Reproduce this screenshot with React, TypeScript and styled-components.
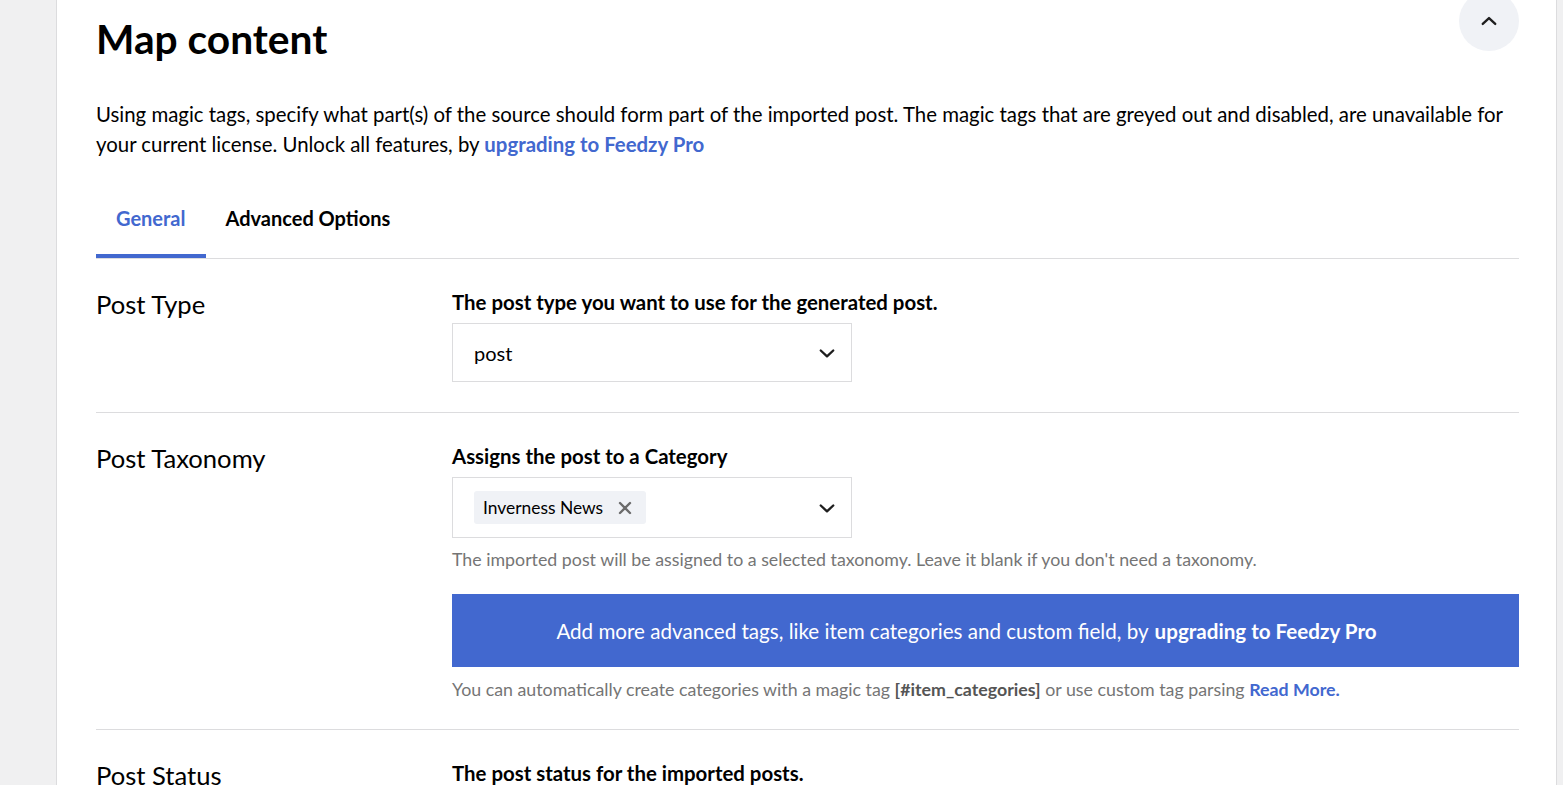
import * as React from 'react';
import styled, { createGlobalStyle } from 'styled-components';

//#region styled
const GlobalStyle = createGlobalStyle`
  html, body {
    margin: 0;
    padding: 0;
    background: #f0f0f1;
    font-family: Lato, "Noto Sans", sans-serif;
    color: #000;
  }
`

const Page = styled.div`
  display: flex;
  height: 785px;
  padding: 0 6px 0 56px;
  overflow: hidden;
`

const Card = styled.div`
  flex: 1;
  background: #fff;
  border-left: 1px solid #dcdcde;
  border-right: 1px solid #dcdcde;
  padding: 0 37px 0 39px;
`

const Header = styled.div`
  display: flex;
  justify-content: space-between;
  align-items: flex-start;
`

const Title = styled.h1`
  margin: 15px 0 0;
  font-size: 40.7px;
  line-height: 48px;
  font-weight: 700;
`

const ToggleButton = styled.button`
  width: 60px;
  height: 60px;
  margin-top: -9px;
  border: none;
  border-radius: 50%;
  background: #f0f2f6;
  display: flex;
  align-items: center;
  justify-content: center;
  padding: 0;
`

const Intro = styled.p`
  margin: 36px 0 0;
  font-size: 20.4px;
  line-height: 30px;
`

const Link = styled.a`
  color: #4268cf;
  font-weight: 700;
  text-decoration: none;
`

const Tabs = styled.div`
  display: flex;
  margin-top: 21px;
  border-bottom: 1px solid #dcdcde;
`

const Tab = styled.div<{ $active?: boolean }>`
  box-sizing: border-box;
  padding: 0 20px 2px;
  height: 78px;
  display: flex;
  align-items: center;
  font-size: 20px;
  font-weight: 700;
  color: ${p => (p.$active ? '#4268cf' : '#000')};
  box-shadow: ${p => (p.$active ? 'inset 0 -4px 0 #4268cf' : 'none')};
`

const Row = styled.div`
  display: grid;
  grid-template-columns: 356px 1fr;
  padding: 30px 0;
  border-bottom: 1px solid #dcdcde;
`

const RowTitle = styled.h2`
  margin: 0;
  font-size: 25.6px;
  line-height: 30px;
  font-weight: 400;
`

const Field = styled.div`
  display: flex;
  flex-direction: column;
`

const FieldLabel = styled.label`
  font-size: 20.4px;
  line-height: 26px;
  font-weight: 700;
  margin-bottom: 8px;
`

const Select = styled.div<{ $tall?: boolean }>`
  width: 400px;
  box-sizing: border-box;
  height: ${p => (p.$tall ? '61px' : '59px')};
  border: 1px solid #dcdcde;
  display: flex;
  align-items: center;
  justify-content: space-between;
  padding: 0 14px 0 21px;
  font-size: 20px;
`

const Chip = styled.span`
  display: inline-flex;
  align-items: center;
  gap: 15px;
  background: #f0f2f6;
  border-radius: 3px;
  padding: 0 14px 0 9px;
  height: 33px;
  font-size: 17.4px;
`

const Help = styled.p<{ $tight?: boolean }>`
  margin: ${p => (p.$tight ? '9px 0 -3px' : '8px 0 0')};
  font-size: 17.8px;
  line-height: 26px;
  color: #757575;

  b {
    color: #555;
  }
`

const Banner = styled.div`
  margin-top: 22px;
  height: 73px;
  padding-right: 38px;
  background: #4268cf;
  color: #fff;
  display: flex;
  align-items: center;
  justify-content: center;
  font-size: 20.6px;

  b {
    font-weight: 700;
    margin-left: 6px;
  }
`

const LastRow = styled(Row)`
  border-bottom: none;
`
//#endregion

const Chevron = ({ up }: { up?: boolean }) => (
  <svg width="20" height="20" viewBox="0 0 24 24" fill="none" stroke="#1e1e1e" strokeWidth="2.8"
    strokeLinecap="round" strokeLinejoin="round">
    <path d={up ? 'M4.5 15.5l7.5-7 7.5 7' : 'M4.5 9l7.5 7 7.5-7'} />
  </svg>
)

const RemoveIcon = () => (
  <svg width="14" height="14" viewBox="0 0 14 14" stroke="#6b6b6b" strokeWidth="2.4" strokeLinecap="round">
    <path d="M2 2l10 10M12 2L2 12" />
  </svg>
)

export default function App() {
  return (
    <Page>
      <GlobalStyle />
      <Card>
        <Header>
          <Title>Map content</Title>
          <ToggleButton>
            <Chevron up />
          </ToggleButton>
        </Header>
        <Intro>
          Using magic tags, specify what part(s) of the source should form part of the imported post. The magic tags that
          are greyed out and disabled, are unavailable for your current license. Unlock all features, by{' '}
          <Link href="#">upgrading to Feedzy Pro</Link>
        </Intro>

        <Tabs>
          <Tab $active>General</Tab>
          <Tab>Advanced Options</Tab>
        </Tabs>

        <Row>
          <RowTitle>Post Type</RowTitle>
          <Field>
            <FieldLabel>The post type you want to use for the generated post.</FieldLabel>
            <Select>
              <span>post</span>
              <Chevron />
            </Select>
          </Field>
        </Row>

        <Row>
          <RowTitle>Post Taxonomy</RowTitle>
          <Field>
            <FieldLabel>Assigns the post to a Category</FieldLabel>
            <Select $tall>
              <Chip>
                Inverness News <RemoveIcon />
              </Chip>
              <Chevron />
            </Select>
            <Help>The imported post will be assigned to a selected taxonomy. Leave it blank if you don't need a taxonomy.</Help>
            <Banner>
              Add more advanced tags, like item categories and custom field, by <b>upgrading to Feedzy Pro</b>
            </Banner>
            <Help $tight>
              You can automatically create categories with a magic tag <b>[#item_categories]</b> or use custom tag parsing{' '}
              <Link href="#">Read More.</Link>
            </Help>
          </Field>
        </Row>

        <LastRow>
          <RowTitle>Post Status</RowTitle>
          <Field>
            <FieldLabel>The post status for the imported posts.</FieldLabel>
          </Field>
        </LastRow>
      </Card>
    </Page>
  );
}
